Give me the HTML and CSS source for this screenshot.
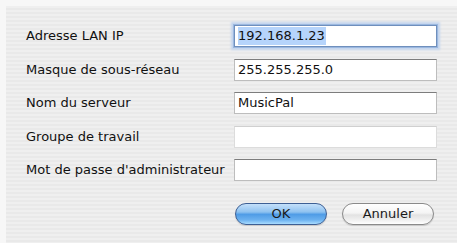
FILE: index.html
```html
<!DOCTYPE html>
<html lang="fr">
<head>
<meta charset="utf-8">
<link rel="stylesheet" href="styles.css">
</head>
<body>
<div class="dialog">
  <div class="form">
    <label class="label">Adresse LAN IP</label>
    <div class="field focused"><span class="sel">192.168.1.23</span></div>
    <label class="label">Masque de sous-réseau</label>
    <div class="field">255.255.255.0</div>
    <label class="label">Nom du serveur</label>
    <div class="field">MusicPal</div>
    <label class="label">Groupe de travail</label>
    <div class="field faint"></div>
    <label class="label">Mot de passe d'administrateur</label>
    <div class="field"></div>
  </div>
  <div class="buttons">
    <div class="btn primary">OK</div>
    <div class="btn">Annuler</div>
  </div>
</div>
</body>
</html>
```
FILE: styles.css
```css
html, body {
  margin: 0;
  padding: 0;
  background: #f7f7f7;
}
.dialog {
  width: 451px;
  height: 237px;
  margin: 6px 0 0 6px;
  box-sizing: border-box;
  background: repeating-linear-gradient(to bottom, #efefef 0, #efefef 2px, #e9e9e9 2px, #e9e9e9 4px);
  font-family: "DejaVu Sans", sans-serif;
  font-size: 13px;
  color: #111;
  padding: 19px 0 0 20px;
}
.form {
  display: grid;
  grid-template-columns: 208px 203px;
  grid-auto-rows: 22px;
  row-gap: 11.5px;
  align-items: center;
}
.label {
  line-height: 22px;
  white-space: nowrap;
}
.field {
  height: 22px;
  box-sizing: border-box;
  background: #fff;
  border: 1px solid #bdbdbd;
  border-top-color: #7d7d7d;
  padding: 0 3px;
  line-height: 20px;
  white-space: nowrap;
}
.field.faint {
  border-color: #dcdcdc;
  border-top-color: #d0d0d0;
}
.field.focused {
  border-color: #6f8fbd;
  box-shadow: 0 0 0 1px #9bb8df, 0 0 2px 3px #c3d5ee;
}
.sel {
  background: #b6d4fb;
  display: inline-block;
  line-height: 18px;
  padding-right: 1px;
}
.buttons {
  display: flex;
  gap: 15px;
  margin: 22px 0 0 209px;
}
.btn {
  width: 92px;
  height: 22px;
  box-sizing: border-box;
  border-radius: 11px;
  border: 1px solid #8a8a8a;
  background: linear-gradient(to bottom, #ffffff 0%, #f4f4f4 45%, #e2e2e2 55%, #f3f3f3 85%, #ffffff 100%);
  box-shadow: 0 1px 1px rgba(0,0,0,0.15);
  text-align: center;
  line-height: 20px;
  color: #1a1a1a;
}
.btn.primary {
  border-color: #3d5f94;
  background: linear-gradient(to bottom, #c4e0fa 0%, #8fc2f0 40%, #4f9ce6 52%, #6db2f0 80%, #a9dcff 100%);
}
```
